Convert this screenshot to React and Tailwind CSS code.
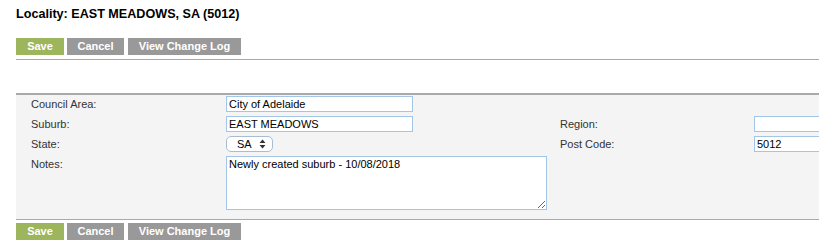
import React from "react";

function Btn({ children, green, className = "" }) {
  return (
    <div
      className={`h-[17px] flex items-center justify-center text-white font-bold text-[11px] leading-none ${
        green ? "bg-[#9db55c]" : "bg-[#999999]"
      } ${className}`}
    >
      {children}
    </div>
  );
}

function Buttons() {
  return (
    <div className="flex pl-4">
      <Btn green className="w-[48px]">Save</Btn>
      <Btn className="w-[57px] ml-[3px]">Cancel</Btn>
      <Btn className="w-[113px] ml-[4px]">View Change Log</Btn>
    </div>
  );
}

function Input({ value, className = "" }) {
  return (
    <input
      readOnly
      defaultValue={value}
      className={`h-[16px] border border-[#a3c5e6] bg-white px-[2px] py-0 text-[11px] text-black outline-none font-['Liberation_Sans'] ${className}`}
    />
  );
}

function Label({ children }) {
  return <div className="text-[11px] leading-[16px] text-[#333]">{children}</div>;
}

export default function App() {
  return (
    <div className="w-[819px] h-[250px] bg-white font-['Liberation_Sans',Arial,sans-serif] overflow-hidden">
      <div className="pl-4 pt-[7px] text-[12.6px] leading-[15px] font-bold text-black">
        Locality: EAST MEADOWS, SA (5012)
      </div>
      <div className="mt-[16px]">
        <Buttons />
      </div>
      <div className="ml-4 mt-[4px] border-t border-[#aaaaaa]" />
      <div className="ml-4 mt-[33px] border-t-2 border-b border-t-[#aaaaaa] border-b-[#aaaaaa] bg-[#f4f4f4] pl-[15px] pt-[1px] pb-[9px]">
        <div className="grid grid-cols-[195px_334px_194px_1fr] gap-y-[4px] items-start">
          <Label>Council Area:</Label>
          <Input value="City of Adelaide" className="w-[187px]" />
          <div />
          <div />

          <Label>Suburb:</Label>
          <Input value="EAST MEADOWS" className="w-[187px]" />
          <Label>Region:</Label>
          <Input value="" className="w-[80px]" />

          <Label>State:</Label>
          <div className="w-[47px] h-[16px] rounded-[5px] border border-[#a9bdd2] bg-white flex items-center pl-[10px] pr-[6px] justify-between text-[11px] text-black">
            <span>SA</span>
            <svg width="7" height="10" viewBox="0 0 7 10">
              <path d="M3.5 0.5 L6.5 4 L0.5 4 Z" fill="#333" />
              <path d="M3.5 9.5 L6.5 6 L0.5 6 Z" fill="#333" />
            </svg>
          </div>
          <Label>Post Code:</Label>
          <Input value="5012" className="w-[80px]" />

          <Label>Notes:</Label>
          <textarea
            readOnly
            defaultValue="Newly created suburb - 10/08/2018"
            className="w-[321px] h-[54px] border border-[#a3c5e6] bg-white px-[2px] py-[1px] text-[11px] leading-[13px] text-black outline-none font-['Liberation_Sans'] block"
          />
          <div />
          <div />
        </div>
      </div>
      <div className="mt-[3px]">
        <Buttons />
      </div>
    </div>
  );
}
